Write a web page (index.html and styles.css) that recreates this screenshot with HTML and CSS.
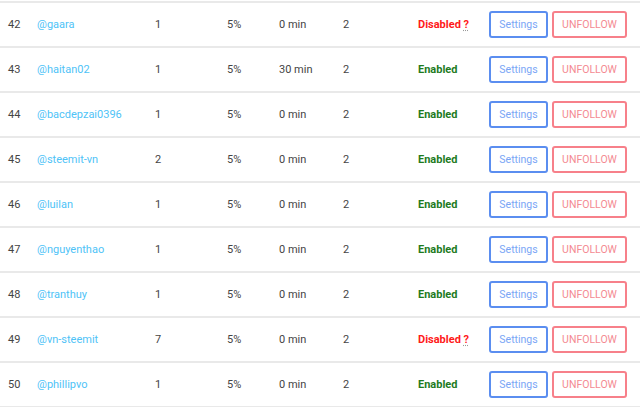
FILE: index.html
```html
<!DOCTYPE html>
<html lang="en">
<head>
    <meta charset="UTF-8">
    <title>Following</title>
    <link rel="stylesheet" href="styles.css">
</head>
<body>
    <table class="follow-table">
        <tbody>
            <tr>
                <td class="col-num">42</td>
                <td class="col-user"><a href="#">@gaara</a></td>
                <td class="col-count">1</td>
                <td class="col-pct">5%</td>
                <td class="col-time">0 min</td>
                <td class="col-limit">2</td>
                <td class="col-status"><span class="disabled">Disabled <abbr title="Why?">?</abbr></span></td>
                <td class="col-actions"><button class="btn btn-settings">Settings</button><button class="btn btn-unfollow">UNFOLLOW</button></td>
            </tr>
            <tr>
                <td class="col-num">43</td>
                <td class="col-user"><a href="#">@haitan02</a></td>
                <td class="col-count">1</td>
                <td class="col-pct">5%</td>
                <td class="col-time">30 min</td>
                <td class="col-limit">2</td>
                <td class="col-status"><span class="enabled">Enabled</span></td>
                <td class="col-actions"><button class="btn btn-settings">Settings</button><button class="btn btn-unfollow">UNFOLLOW</button></td>
            </tr>
            <tr>
                <td class="col-num">44</td>
                <td class="col-user"><a href="#">@bacdepzai0396</a></td>
                <td class="col-count">1</td>
                <td class="col-pct">5%</td>
                <td class="col-time">0 min</td>
                <td class="col-limit">2</td>
                <td class="col-status"><span class="enabled">Enabled</span></td>
                <td class="col-actions"><button class="btn btn-settings">Settings</button><button class="btn btn-unfollow">UNFOLLOW</button></td>
            </tr>
            <tr>
                <td class="col-num">45</td>
                <td class="col-user"><a href="#">@steemit-vn</a></td>
                <td class="col-count">2</td>
                <td class="col-pct">5%</td>
                <td class="col-time">0 min</td>
                <td class="col-limit">2</td>
                <td class="col-status"><span class="enabled">Enabled</span></td>
                <td class="col-actions"><button class="btn btn-settings">Settings</button><button class="btn btn-unfollow">UNFOLLOW</button></td>
            </tr>
            <tr>
                <td class="col-num">46</td>
                <td class="col-user"><a href="#">@luilan</a></td>
                <td class="col-count">1</td>
                <td class="col-pct">5%</td>
                <td class="col-time">0 min</td>
                <td class="col-limit">2</td>
                <td class="col-status"><span class="enabled">Enabled</span></td>
                <td class="col-actions"><button class="btn btn-settings">Settings</button><button class="btn btn-unfollow">UNFOLLOW</button></td>
            </tr>
            <tr>
                <td class="col-num">47</td>
                <td class="col-user"><a href="#">@nguyenthao</a></td>
                <td class="col-count">1</td>
                <td class="col-pct">5%</td>
                <td class="col-time">0 min</td>
                <td class="col-limit">2</td>
                <td class="col-status"><span class="enabled">Enabled</span></td>
                <td class="col-actions"><button class="btn btn-settings">Settings</button><button class="btn btn-unfollow">UNFOLLOW</button></td>
            </tr>
            <tr>
                <td class="col-num">48</td>
                <td class="col-user"><a href="#">@tranthuy</a></td>
                <td class="col-count">1</td>
                <td class="col-pct">5%</td>
                <td class="col-time">0 min</td>
                <td class="col-limit">2</td>
                <td class="col-status"><span class="enabled">Enabled</span></td>
                <td class="col-actions"><button class="btn btn-settings">Settings</button><button class="btn btn-unfollow">UNFOLLOW</button></td>
            </tr>
            <tr>
                <td class="col-num">49</td>
                <td class="col-user"><a href="#">@vn-steemit</a></td>
                <td class="col-count">7</td>
                <td class="col-pct">5%</td>
                <td class="col-time">0 min</td>
                <td class="col-limit">2</td>
                <td class="col-status"><span class="disabled">Disabled <abbr title="Why?">?</abbr></span></td>
                <td class="col-actions"><button class="btn btn-settings">Settings</button><button class="btn btn-unfollow">UNFOLLOW</button></td>
            </tr>
            <tr>
                <td class="col-num">50</td>
                <td class="col-user"><a href="#">@phillipvo</a></td>
                <td class="col-count">1</td>
                <td class="col-pct">5%</td>
                <td class="col-time">0 min</td>
                <td class="col-limit">2</td>
                <td class="col-status"><span class="enabled">Enabled</span></td>
                <td class="col-actions"><button class="btn btn-settings">Settings</button><button class="btn btn-unfollow">UNFOLLOW</button></td>
            </tr>
        </tbody>
    </table>
</body>
</html>
```

FILE: styles.css
```css
body {
    margin: 0;
    padding: 1px 0 0 0;
    background-color: #fff;
    font-family: Roboto, "Liberation Sans", Arial, sans-serif;
    font-size: 11px;
    color: #444;
}

.follow-table {
    width: 640px;
    border-collapse: collapse;
    table-layout: fixed;
}

.follow-table td {
    height: 43px;
    padding: 0;
    border-top: 2px solid #e9e9e9;
    border-bottom: 2px solid #e9e9e9;
    vertical-align: middle;
    white-space: nowrap;
}

.col-num { width: 29px; padding-left: 8px !important; }
.col-user { width: 118px; }
.col-count { width: 72px; }
.col-pct { width: 52px; }
.col-time { width: 64px; }
.col-limit { width: 75px; }
.col-status { width: 71px; }

.col-user a {
    color: #4fc3f7;
    text-decoration: none;
}

.enabled {
    color: #1e7b1e;
    font-weight: bold;
}

.disabled {
    color: #ff1a1a;
    font-weight: bold;
}

.disabled abbr {
    text-decoration: underline dotted #999;
    text-underline-offset: 2px;
    cursor: help;
}

.col-actions {
    font-size: 0;
}

.btn {
    height: 27px;
    margin-right: 4px;
    padding: 0;
    background: #fff;
    border-width: 2px;
    border-style: solid;
    border-radius: 3px;
    font-family: Roboto, "Liberation Sans", Arial, sans-serif;
    font-size: 10.5px;
    vertical-align: middle;
    cursor: pointer;
}

.btn-settings {
    width: 59px;
    border-color: #5b8ef0;
    color: #7aa6f6;
}

.btn-unfollow {
    width: 75px;
    border-color: #f7808a;
    color: #f48a92;
}
```
